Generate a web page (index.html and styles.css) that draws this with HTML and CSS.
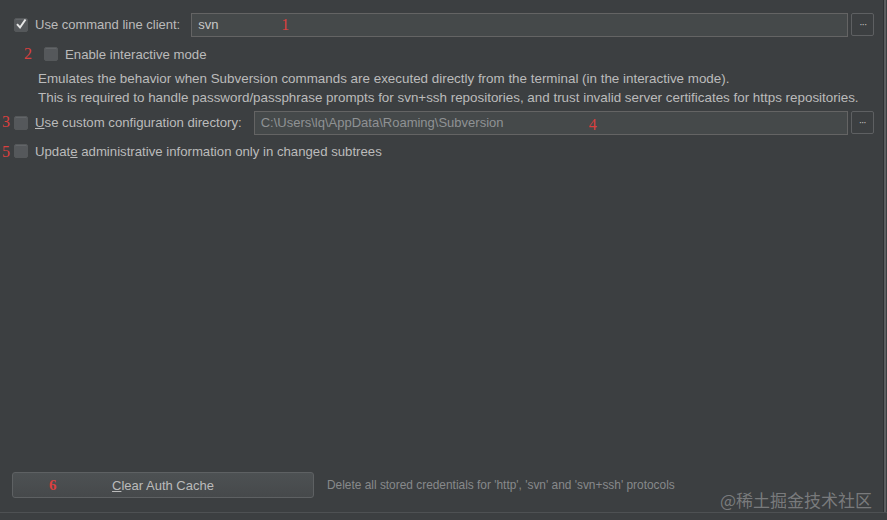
FILE: index.html
```html
<!DOCTYPE html>
<html>
<head>
<meta charset="utf-8">
<link rel="stylesheet" href="styles.css">
</head>
<body>
<div class="panel">
  <div class="content">
    <div class="row row1">
      <span class="cb checked"><svg viewBox="0 0 14 14" width="14" height="14"><path d="M3 7.2 L6 10.5 L11.5 2.5" fill="none" stroke="#e6e6e6" stroke-width="2"/></svg></span>
      <span class="label">Use command line client:</span>
      <div class="field field1"><span class="val">svn</span><span class="mark m1">1</span></div>
      <span class="browse">···</span>
    </div>
    <div class="row row2">
      <span class="mark m2">2</span>
      <span class="cb"></span>
      <span class="label">Enable interactive mode</span>
    </div>
    <div class="desc">
      <p>Emulates the behavior when Subversion commands are executed directly from the terminal (in the interactive mode).</p>
      <p>This is required to handle password/passphrase prompts for svn+ssh repositories, and trust invalid server certificates for https repositories.</p>
    </div>
    <div class="row row3">
      <span class="mark m3">3</span>
      <span class="cb"></span>
      <span class="label"><u>U</u>se custom configuration directory:</span>
      <div class="field field3"><span class="val dim">C:\Users\lq\AppData\Roaming\Subversion</span><span class="mark m4">4</span></div>
      <span class="browse">···</span>
    </div>
    <div class="row row5">
      <span class="mark m5">5</span>
      <span class="cb"></span>
      <span class="label">Updat<u>e</u> administrative information only in changed subtrees</span>
    </div>
    <div class="spacer"></div>
    <div class="bottom">
      <button class="btn"><span class="mark m6">6</span><span><u>C</u>lear Auth Cache</span></button>
      <span class="hint">Delete all stored credentials for 'http', 'svn' and 'svn+ssh' protocols</span>
    </div>
  </div>
  <div class="edge"></div>
</div>
<div class="watermark">@稀土掘金技术社区</div>
</body>
</html>
```
FILE: styles.css
```css
html, body {
  margin: 0;
  padding: 0;
  width: 887px;
  height: 520px;
  overflow: hidden;
  background: #3c3f41;
  font-family: "Liberation Sans", Arial, sans-serif;
  color: #bbbbbb;
  font-size: 13px;
}
.panel {
  display: flex;
  height: 512px;
  border-bottom: 1px solid #4e5153;
}
.content {
  flex: 1;
  display: flex;
  flex-direction: column;
  padding: 12px 0 0 0;
}
.edge {
  width: 2px;
  background: #5b5e60;
  margin-right: 1px;
  border-left: 1px solid #2f3133;
}
.row {
  display: flex;
  align-items: center;
  position: relative;
  padding-left: 14px;
}
.row1 { height: 25px; }
.row2 { height: 24px; margin-top: 5px; padding-left: 44px; }
.row3 { height: 25px; margin-top: 3px; }
.row5 { height: 20px; margin-top: 6px; }
.cb {
  width: 12px;
  height: 12px;
  border: 1px solid #55585a;
  background: #55585b;
  border-radius: 2px;
  flex: none;
  position: relative;
  box-shadow: inset 0 1px 0 #626568;
}
.cb svg { position: absolute; left: -1px; top: -2px; }
.label { margin-left: 7px; white-space: nowrap; font-size: 13.2px; }
.row1 .label { font-size: 13px; }
.field {
  height: 21px;
  border: 1px solid #646464;
  background: #45494a;
  display: flex;
  align-items: center;
  position: relative;
  padding-left: 6px;
  box-sizing: border-box;
}
.field1 { height: 24px; margin-left: 11px; width: 657px; }
.field3 { height: 24px; margin-left: 12px; width: 594px; }
.val { color: #c8c8c8; }
.val.dim { color: #8f9294; }
.browse {
  width: 21px;
  height: 21px;
  margin-left: 3px;
  border: 1px solid #5e6062;
  border-radius: 2px;
  color: #c0c0c0;
  font-size: 10px;
  display: flex;
  align-items: center;
  justify-content: center;
  line-height: 1;
  letter-spacing: -1px;
}
.mark {
  font-family: "Liberation Serif", "Times New Roman", serif;
  color: #d9403f;
  font-size: 16px;
  position: absolute;
}
.m1 { left: 89px; top: 2px; }
.m2 { left: 24px; top: 3px; }
.m3 { left: 2px; top: 3px; }
.m4 { left: 334px; top: 4px; }
.m5 { left: 2px; top: 2px; }
.m6 { left: 36px; top: 4px; font-weight: bold; font-size: 15px; }
.desc {
  margin-top: 3px;
  padding-left: 38px;
  font-size: 13.4px;
  line-height: 19px;
}
.desc p { margin: 0; white-space: nowrap; }
.spacer { flex: 1; }
.bottom {
  display: flex;
  align-items: center;
  padding-left: 12px;
  margin-bottom: 14px;
}
.btn {
  width: 302px;
  height: 26px;
  border: 1px solid #5e6163;
  border-radius: 3px;
  background: linear-gradient(#4d5153, #46494b);
  color: #bbbbbb;
  font-family: inherit;
  font-size: 13px;
  position: relative;
  padding: 0;
}
.hint {
  margin-left: 13px;
  font-size: 11.9px;
  color: #87898b;
}
.watermark {
  position: absolute;
  left: 720px;
  top: 487px;
  font-family: "Noto Sans CJK SC", sans-serif;
  font-size: 17px;
  color: rgba(200, 200, 200, 0.45);
  letter-spacing: 0;
}
```
